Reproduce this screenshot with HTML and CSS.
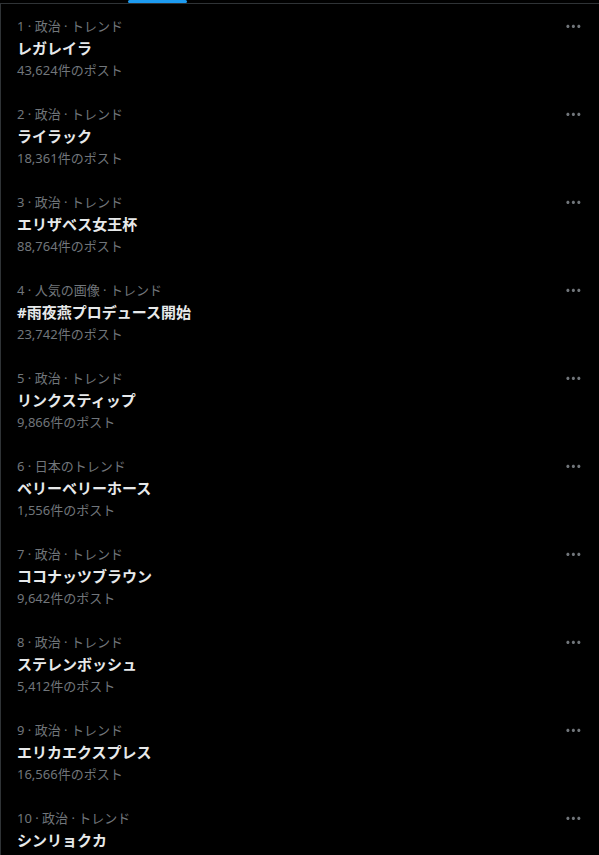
FILE: index.html
```html
<!DOCTYPE html>
<html lang="ja">
  <head>
    <meta charset="UTF-8" />
    <meta name="viewport" content="width=device-width, initial-scale=1.0" />
    <title>トレンド</title>
    <link rel="stylesheet" href="styles.css">
  </head>
  <body>
    <div class="tabbar">
      <div class="indicator"></div>
    </div>

    <div class="list">
      <div class="trend">
        <div class="meta"><span>1 · 政治 · トレンド</span><svg class="more" viewBox="0 0 24 24"><path d="M3 12c0-1.1.9-2 2-2s2 .9 2 2-.9 2-2 2-2-.9-2-2zm9 2c1.1 0 2-.9 2-2s-.9-2-2-2-2 .9-2 2 .9 2 2 2zm7 0c1.1 0 2-.9 2-2s-.9-2-2-2-2 .9-2 2 .9 2 2 2z"/></svg></div>
        <div class="title">レガレイラ</div>
        <div class="count">43,624件のポスト</div>
      </div>
      <div class="trend">
        <div class="meta"><span>2 · 政治 · トレンド</span><svg class="more" viewBox="0 0 24 24"><path d="M3 12c0-1.1.9-2 2-2s2 .9 2 2-.9 2-2 2-2-.9-2-2zm9 2c1.1 0 2-.9 2-2s-.9-2-2-2-2 .9-2 2 .9 2 2 2zm7 0c1.1 0 2-.9 2-2s-.9-2-2-2-2 .9-2 2 .9 2 2 2z"/></svg></div>
        <div class="title">ライラック</div>
        <div class="count">18,361件のポスト</div>
      </div>
      <div class="trend">
        <div class="meta"><span>3 · 政治 · トレンド</span><svg class="more" viewBox="0 0 24 24"><path d="M3 12c0-1.1.9-2 2-2s2 .9 2 2-.9 2-2 2-2-.9-2-2zm9 2c1.1 0 2-.9 2-2s-.9-2-2-2-2 .9-2 2 .9 2 2 2zm7 0c1.1 0 2-.9 2-2s-.9-2-2-2-2 .9-2 2 .9 2 2 2z"/></svg></div>
        <div class="title">エリザベス女王杯</div>
        <div class="count">88,764件のポスト</div>
      </div>
      <div class="trend">
        <div class="meta"><span>4 · 人気の画像 · トレンド</span><svg class="more" viewBox="0 0 24 24"><path d="M3 12c0-1.1.9-2 2-2s2 .9 2 2-.9 2-2 2-2-.9-2-2zm9 2c1.1 0 2-.9 2-2s-.9-2-2-2-2 .9-2 2 .9 2 2 2zm7 0c1.1 0 2-.9 2-2s-.9-2-2-2-2 .9-2 2 .9 2 2 2z"/></svg></div>
        <div class="title">#雨夜燕プロデュース開始</div>
        <div class="count">23,742件のポスト</div>
      </div>
      <div class="trend">
        <div class="meta"><span>5 · 政治 · トレンド</span><svg class="more" viewBox="0 0 24 24"><path d="M3 12c0-1.1.9-2 2-2s2 .9 2 2-.9 2-2 2-2-.9-2-2zm9 2c1.1 0 2-.9 2-2s-.9-2-2-2-2 .9-2 2 .9 2 2 2zm7 0c1.1 0 2-.9 2-2s-.9-2-2-2-2 .9-2 2 .9 2 2 2z"/></svg></div>
        <div class="title">リンクスティップ</div>
        <div class="count">9,866件のポスト</div>
      </div>
      <div class="trend">
        <div class="meta"><span>6 · 日本のトレンド</span><svg class="more" viewBox="0 0 24 24"><path d="M3 12c0-1.1.9-2 2-2s2 .9 2 2-.9 2-2 2-2-.9-2-2zm9 2c1.1 0 2-.9 2-2s-.9-2-2-2-2 .9-2 2 .9 2 2 2zm7 0c1.1 0 2-.9 2-2s-.9-2-2-2-2 .9-2 2 .9 2 2 2z"/></svg></div>
        <div class="title">ベリーベリーホース</div>
        <div class="count">1,556件のポスト</div>
      </div>
      <div class="trend">
        <div class="meta"><span>7 · 政治 · トレンド</span><svg class="more" viewBox="0 0 24 24"><path d="M3 12c0-1.1.9-2 2-2s2 .9 2 2-.9 2-2 2-2-.9-2-2zm9 2c1.1 0 2-.9 2-2s-.9-2-2-2-2 .9-2 2 .9 2 2 2zm7 0c1.1 0 2-.9 2-2s-.9-2-2-2-2 .9-2 2 .9 2 2 2z"/></svg></div>
        <div class="title">ココナッツブラウン</div>
        <div class="count">9,642件のポスト</div>
      </div>
      <div class="trend">
        <div class="meta"><span>8 · 政治 · トレンド</span><svg class="more" viewBox="0 0 24 24"><path d="M3 12c0-1.1.9-2 2-2s2 .9 2 2-.9 2-2 2-2-.9-2-2zm9 2c1.1 0 2-.9 2-2s-.9-2-2-2-2 .9-2 2 .9 2 2 2zm7 0c1.1 0 2-.9 2-2s-.9-2-2-2-2 .9-2 2 .9 2 2 2z"/></svg></div>
        <div class="title">ステレンボッシュ</div>
        <div class="count">5,412件のポスト</div>
      </div>
      <div class="trend">
        <div class="meta"><span>9 · 政治 · トレンド</span><svg class="more" viewBox="0 0 24 24"><path d="M3 12c0-1.1.9-2 2-2s2 .9 2 2-.9 2-2 2-2-.9-2-2zm9 2c1.1 0 2-.9 2-2s-.9-2-2-2-2 .9-2 2 .9 2 2 2zm7 0c1.1 0 2-.9 2-2s-.9-2-2-2-2 .9-2 2 .9 2 2 2z"/></svg></div>
        <div class="title">エリカエクスプレス</div>
        <div class="count">16,566件のポスト</div>
      </div>
      <div class="trend">
        <div class="meta"><span>10 · 政治 · トレンド</span><svg class="more" viewBox="0 0 24 24"><path d="M3 12c0-1.1.9-2 2-2s2 .9 2 2-.9 2-2 2-2-.9-2-2zm9 2c1.1 0 2-.9 2-2s-.9-2-2-2-2 .9-2 2 .9 2 2 2zm7 0c1.1 0 2-.9 2-2s-.9-2-2-2-2 .9-2 2 .9 2 2 2z"/></svg></div>
        <div class="title">シンリョクカ</div>
      </div>
    </div>
  </body>
</html>
```

FILE: styles.css
```css
body {
  margin: 0;
  background: #000;
  font-family: "Noto Sans", "Noto Sans CJK JP", sans-serif;
  overflow: hidden;
}
.tabbar {
  height: 3px;
}
.indicator {
  margin-left: 128px;
  width: 59px;
  height: 3px;
  border-radius: 2px;
  background: #1d9bf0;
}
.list {
  border-top: 1px solid #2f3336;
  border-left: 1px solid #2f3336;
}
.trend {
  padding: 12px 16px 14px 16px;
}
.meta {
  display: flex;
  justify-content: space-between;
  align-items: center;
  height: 20px;
  font-size: 13px;
  line-height: 16px;
  color: #71767b;
}
.more {
  width: 18.75px;
  height: 18.75px;
  fill: #71767b;
}
.title {
  margin-top: 2px;
  font-size: 15px;
  line-height: 20px;
  font-weight: bold;
  color: #e7e9ea;
}
.count {
  margin-top: 4px;
  font-size: 13px;
  line-height: 16px;
  color: #71767b;
}
```
